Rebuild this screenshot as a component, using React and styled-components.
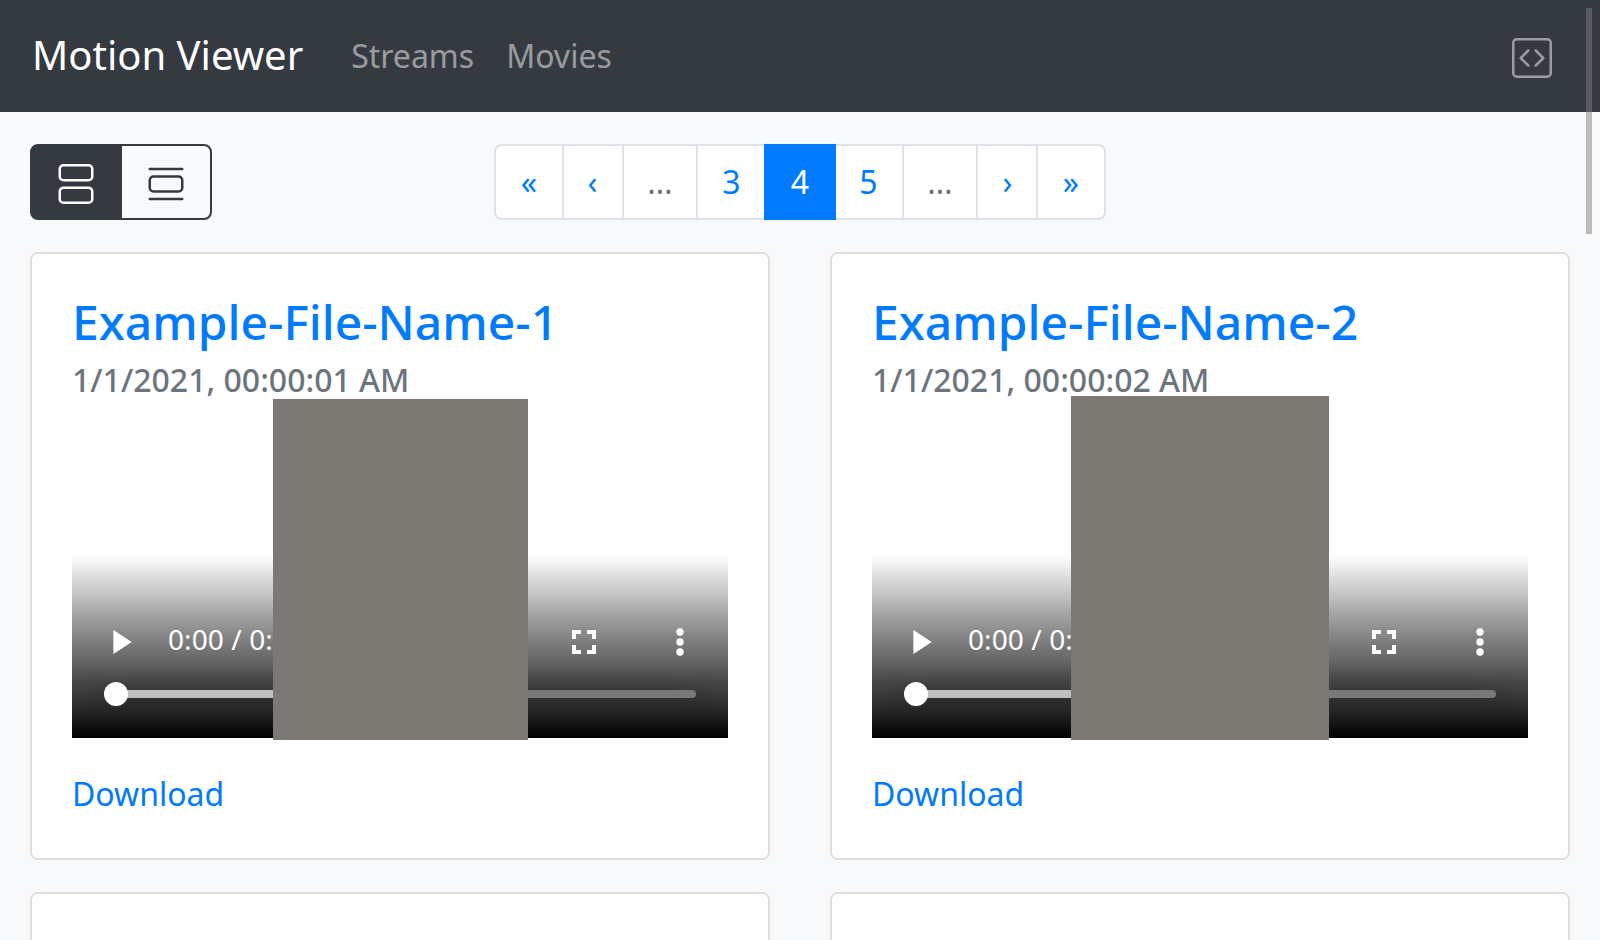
import React from "react";
import styled, { createGlobalStyle } from "styled-components";
import { BsViewStacked, BsViewList, BsCodeSquare } from "react-icons/bs";

const GlobalStyle = createGlobalStyle`
  *, *::before, *::after { box-sizing: border-box; }
  html, body { margin: 0; height: 100%; overflow: hidden; }
  body {
    background: #f8f9fa;
    color: #212529;
    font-family: "Noto Sans", "Liberation Sans", sans-serif;
    font-size: 32px;
    line-height: 1.5;
  }
  a { color: #007bff; text-decoration: none; }
  svg { display: block; }
`;

const Page = styled.div`
  position: relative;
  height: 940px;
  overflow: hidden;
`;

const Navbar = styled.nav`
  display: flex;
  align-items: center;
  height: 112px;
  padding: 0 32px;
  background: #343a40;
`;

const Brand = styled.a`
  margin-right: 32px;
  padding-bottom: 2px;
  color: #fff;
  font-size: 40px;
  line-height: 60px;
`;

const NavLink = styled.a`
  padding: 16px;
  color: rgba(255, 255, 255, 0.5);
`;

const SourceLink = styled(NavLink)`
  margin-left: auto;
  padding-top: 20px;
`;

const Toolbar = styled.div`
  display: grid;
  grid-template-columns: 1fr auto 1fr;
  padding: 32px 30px;
`;

const ViewSwitch = styled.div`
  display: flex;
`;

const ViewButton = styled.button`
  height: 76px;
  padding: 3px 24px 0;
  border: 2px solid #343a40;
  border-radius: ${(p) => (p.$active ? "8px 0 0 8px" : "0 8px 8px 0")};
  background: ${(p) => (p.$active ? "#343a40" : "transparent")};
  color: ${(p) => (p.$active ? "#fff" : "#343a40")};

  & + & { margin-left: -2px; }
`;

const Pagination = styled.ul`
  display: flex;
  margin: 0;
  padding: 0;
  list-style: none;
`;

const PageItem = styled.li`
  position: relative;
  z-index: ${(p) => (p.$active ? 1 : 0)};
  display: flex;
  justify-content: center;
  width: ${(p) => p.$width}px;
  padding: ${(p) => p.$inset || "16px 0"};
  border: 2px solid ${(p) => (p.$active ? "#007bff" : "#dee2e6")};
  background: ${(p) => (p.$active ? "#007bff" : "#fff")};
  color: ${(p) => (p.$active ? "#fff" : p.$disabled ? "#6c757d" : "#007bff")};
  line-height: 40px;

  & + & { margin-left: -2px; }
  &:first-child { border-radius: 8px 0 0 8px; }
  &:last-child { border-radius: 0 8px 8px 0; }
`;

const CardGrid = styled.main`
  display: grid;
  grid-template-columns: 1fr 1fr;
  gap: 32px 60px;
  padding: 0 30px;
`;

const Card = styled.article`
  height: 608px;
  padding: 40px;
  border: 2px solid #dfdfdf;
  border-radius: 8px;
  background: #fff;
`;

const CardTitle = styled.h4`
  margin: 0 0 12px;
  font-size: 48px;
  font-weight: 500;
  line-height: 56px;
`;

const CardSubtitle = styled.h6`
  margin: 0;
  padding-bottom: 4px;
  color: #6c757d;
  font-size: 32px;
  font-weight: 500;
  line-height: 36px;
`;

const Video = styled.div`
  position: relative;
  display: flex;
  flex-direction: column;
  justify-content: flex-end;
  height: 336px;
  margin-bottom: 32px;
`;

const Controls = styled.div`
  height: 184px;
  padding: 64px 32px 0;
  background: linear-gradient(
    to bottom,
    rgba(0, 0, 0, 0) 0%,
    rgba(0, 0, 0, 0.04) 4.5%,
    rgba(0, 0, 0, 0.14) 13%,
    rgba(0, 0, 0, 0.23) 22%,
    rgba(0, 0, 0, 0.34) 31.5%,
    rgba(0, 0, 0, 0.43) 40%,
    rgba(0, 0, 0, 0.51) 48%,
    rgba(0, 0, 0, 0.61) 59%,
    rgba(0, 0, 0, 0.7) 67%,
    rgba(0, 0, 0, 0.75) 73%,
    rgba(0, 0, 0, 0.8) 79%,
    rgba(0, 0, 0, 0.86) 86%,
    #000 100%
  );
  color: #fff;
`;

const ControlRow = styled.div`
  display: flex;
  align-items: center;
  height: 48px;
`;

const PlayButton = styled.span`
  width: 64px;
  padding-left: 9px;
`;

const Time = styled.span`
  padding-bottom: 6px;
  font-size: 28px;
  letter-spacing: 0.1px;
  line-height: 40px;
`;

const RightControls = styled.span`
  display: flex;
  gap: 48px;
  margin-left: auto;
  margin-right: -8px;
`;

const Track = styled.div`
  display: flex;
  align-items: center;
  height: 8px;
  margin-top: 24px;
  border-radius: 4px;
  background: linear-gradient(to right, #c0c0c0 50%, #787878 50%);
  box-shadow: 0 0 20px rgba(0, 0, 0, 0.3);
`;

const Thumb = styled.span`
  width: 24px;
  height: 24px;
  border-radius: 50%;
  background: #fff;
`;

const Redaction = styled.div`
  position: absolute;
  top: ${(p) => p.$top}px;
  left: ${(p) => p.$left}px;
  bottom: -2px;
  width: ${(p) => p.$width}px;
  background: #7c7873;
`;

const ScrollThumb = styled.div`
  position: absolute;
  top: 8px;
  right: 8px;
  width: 6px;
  height: 226px;
  background: rgba(128, 128, 128, 0.5);
`;

const pages = [
  { label: "«", width: 70 },
  { label: "‹", width: 62, inset: "16px 1px 16px 0" },
  { label: "…", width: 76, disabled: true },
  { label: "3", width: 70, inset: "16px 0 16px 1px" },
  { label: "4", width: 72, active: true },
  { label: "5", width: 70, inset: "16px 1px 16px 0" },
  { label: "…", width: 76, disabled: true },
  { label: "›", width: 62, inset: "16px 0 16px 1px" },
  { label: "»", width: 70 },
];

const movies = [
  { name: "Example-File-Name-1", date: "1/1/2021, 00:00:01 AM", cover: { top: -3, left: 201, width: 255 } },
  { name: "Example-File-Name-2", date: "1/1/2021, 00:00:02 AM", cover: { top: -6, left: 199, width: 258 } },
];

function Player({ cover }) {
  return (
    <Video>
      <Controls>
        <ControlRow>
          <PlayButton>
            <svg width="19" height="24" viewBox="0 0 19 24" fill="currentColor">
              <path d="M.4 0v24l18.300-12z" />
            </svg>
          </PlayButton>
          <Time>0:00 / 0:11</Time>
          <RightControls>
            <svg width="48" height="48" viewBox="0 0 48 48" fill="currentColor">
              <path d="M12 12h9v4h-5v5h-4zM27 12h9v9h-4v-5h-5zM12 27h4v5h5v4h-9zM32 27h4v9h-9v-4h5z" />
            </svg>
            <svg width="48" height="48" viewBox="0 0 48 48" fill="currentColor">
              <circle cx="24" cy="14" r="3.700" />
              <circle cx="24" cy="24" r="3.700" />
              <circle cx="24" cy="34" r="3.700" />
            </svg>
          </RightControls>
        </ControlRow>
        <Track>
          <Thumb />
        </Track>
      </Controls>
      <Redaction $top={cover.top} $left={cover.left} $width={cover.width} />
    </Video>
  );
}

export default function App() {
  return (
    <Page>
      <GlobalStyle />
      <Navbar>
        <Brand href="#">Motion Viewer</Brand>
        <NavLink href="#">Streams</NavLink>
        <NavLink href="#">Movies</NavLink>
        <SourceLink href="#">
          <BsCodeSquare size={40} />
        </SourceLink>
      </Navbar>
      <Toolbar>
        <ViewSwitch>
          <ViewButton $active>
            <BsViewStacked size={40} />
          </ViewButton>
          <ViewButton>
            <BsViewList size={40} />
          </ViewButton>
        </ViewSwitch>
        <Pagination>
          {pages.map((page, i) => (
            <PageItem
              key={i}
              $width={page.width}
              $inset={page.inset}
              $active={page.active}
              $disabled={page.disabled}
            >
              {page.label}
            </PageItem>
          ))}
        </Pagination>
      </Toolbar>
      <CardGrid>
        {movies.map((movie) => (
          <Card key={movie.name}>
            <CardTitle>
              <a href="#">{movie.name}</a>
            </CardTitle>
            <CardSubtitle>{movie.date}</CardSubtitle>
            <Player cover={movie.cover} />
            <a href="#">Download</a>
          </Card>
        ))}
        <Card />
        <Card />
      </CardGrid>
      <ScrollThumb />
    </Page>
  );
}
